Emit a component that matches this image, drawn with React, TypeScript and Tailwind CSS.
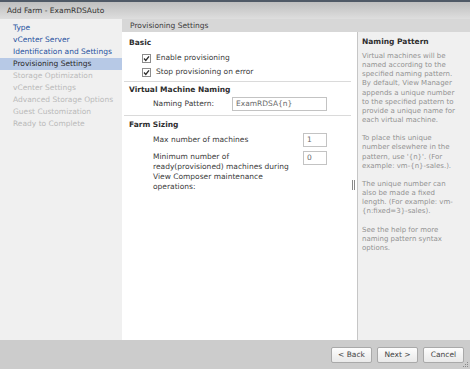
import React from "react";

const navItems = [
  { label: "Type", state: "link" },
  { label: "vCenter Server", state: "link" },
  { label: "Identification and Settings", state: "link" },
  { label: "Provisioning Settings", state: "active" },
  { label: "Storage Optimization", state: "off" },
  { label: "vCenter Settings", state: "off" },
  { label: "Advanced Storage Options", state: "off" },
  { label: "Guest Customization", state: "off" },
  { label: "Ready to Complete", state: "off" },
];

const helpParas = [
  [
    "Virtual machines will be",
    "named according to the",
    "specified naming pattern.",
    "By default, View Manager",
    "appends a unique number",
    "to the specified pattern to",
    "provide a unique name for",
    "each virtual machine.",
  ],
  [
    "To place this unique",
    "number elsewhere in the",
    "pattern, use '{n}'. (For",
    "example: vm-{n}-sales.).",
  ],
  [
    "The unique number can",
    "also be made a fixed",
    "length. (For example: vm-",
    "{n:fixed=3}-sales).",
  ],
  ["See the help for more", "naming pattern syntax", "options."],
];

function CheckBox() {
  return (
    <svg width="9" height="9" viewBox="0 0 9 9" className="shrink-0">
      <rect x="0.5" y="0.5" width="8" height="8" fill="#fff" stroke="#8c8c8c" />
      <path d="M2 4.5 L3.8 6.5 L7 2.3" fill="none" stroke="#2d2d2d" strokeWidth="1.3" />
    </svg>
  );
}

function Field({ value, className }: { value: string; className: string }) {
  return (
    <div
      className={`h-[14px] border border-[#c3c3c3] bg-white px-[3px] leading-[12px] text-[#6a6a6a] ${className}`}
    >
      {value}
    </div>
  );
}

function Button({ label }: { label: string }) {
  return (
    <div className="flex h-[16px] w-[41px] items-center justify-center rounded-[2px] border border-[#a9a9a9] bg-gradient-to-b from-[#fdfdfd] to-[#e9e9e9] text-[#444]">
      {label}
    </div>
  );
}

export default function App() {
  return (
    <div className="flex h-[369px] w-[470px] flex-col overflow-hidden bg-[#f0f0f0] text-[7.5px] text-[#3a3a3a] [font-family:'DejaVu_Sans',Verdana,sans-serif]">
      {/* title bar */}
      <div className="flex h-[19px] shrink-0 items-center border-t-2 border-[#4f5966] bg-gradient-to-b from-[#bfbfbf] to-[#dedede] pl-[7px] leading-[10px] text-[#333]">
        Add Farm - ExamRDSAuto
      </div>

      <div className="flex min-h-0 flex-1">
        {/* wizard steps */}
        <nav className="w-[122px] shrink-0 bg-[#f0f0f0] pt-[3px]">
          {navItems.map((n) => (
            <div
              key={n.label}
              className={`h-[12px] pl-[13px] leading-[12px] whitespace-nowrap ${
                n.state === "active"
                  ? "bg-[#b7c9e6] text-[#2a2a2a]"
                  : n.state === "link"
                  ? "text-[#2752a0]"
                  : "text-[#bababa]"
              }`}
            >
              {n.label}
            </div>
          ))}
        </nav>

        <div className="flex min-w-0 flex-1 flex-col">
          <div className="h-[13px] shrink-0 bg-[#d7d7d7] pl-[8px] leading-[13px] text-[#3c3c3c]">
            Provisioning Settings
          </div>

          <div className="flex min-h-0 flex-1">
            {/* form */}
            <section className="flex min-w-0 flex-1 flex-col bg-white pt-[6px]">
              <div className="pl-[7px] font-bold leading-[10px] text-[#2e2e2e]">Basic</div>
              <div className="mt-[3px] flex h-[14px] items-center gap-[5px] pl-[20px]">
                <CheckBox />
                <span>Enable provisioning</span>
              </div>
              <div className="flex h-[14px] items-center gap-[5px] pl-[20px]">
                <CheckBox />
                <span>Stop provisioning on error</span>
              </div>
              <div className="mt-[2px] ml-[2px] mr-[6px] h-px bg-[#dadada]" />

              <div className="mt-[3px] pl-[7px] font-bold leading-[10px] text-[#2e2e2e]">
                Virtual Machine Naming
              </div>
              <div className="mt-[2px] flex h-[14px] items-center pl-[31px]">
                <span className="w-[79px]">Naming Pattern:</span>
                <Field value="ExamRDSA{n}" className="w-[95px]" />
              </div>
              <div className="mt-[4px] ml-[2px] mr-[6px] h-px bg-[#dadada]" />

              <div className="mt-[4px] pl-[7px] font-bold leading-[10px] text-[#2e2e2e]">Farm Sizing</div>
              <div className="mt-[3px] flex h-[14px] items-center pl-[31px]">
                <span className="w-[150px]">Max number of machines</span>
                <Field value="1" className="w-[24px]" />
              </div>
              <div className="mt-[4px] flex pl-[31px] pr-[2px]">
                <span className="w-[150px] pt-px leading-[10px] whitespace-nowrap">
                  Minimum number of
                  <br />
                  ready(provisioned) machines during
                  <br />
                  View Composer maintenance
                  <br />
                  operations:
                </span>
                <Field value="0" className="w-[24px]" />
                <div className="ml-auto mb-[2px] flex gap-px self-end">
                  <div className="h-[10px] w-px bg-[#8a8a8a]" />
                  <div className="h-[10px] w-px bg-[#8a8a8a]" />
                </div>
              </div>
            </section>

            {/* help */}
            <aside className="w-[113px] shrink-0 border-l border-[#c6c6c6] bg-[#f0f0f0] pt-[5px] pl-[4px]">
              <div className="font-bold leading-[10px] text-[#2e2e2e]">Naming Pattern</div>
              <div className="mt-[5px] flex flex-col gap-[9px] text-[7px] leading-[9.15px] whitespace-nowrap text-[#929292]">
                {helpParas.map((p, i) => (
                  <div key={i}>
                    {p.map((l) => (
                      <div key={l}>{l}</div>
                    ))}
                  </div>
                ))}
              </div>
            </aside>
          </div>
        </div>
      </div>

      {/* footer */}
      <footer className="relative flex h-[29px] shrink-0 items-center justify-end gap-[5px] bg-[#cccccc] pr-[6px]">
        <Button label="< Back" />
        <Button label="Next >" />
        <Button label="Cancel" />
        <svg width="6" height="6" viewBox="0 0 6 6" className="absolute right-[1px] bottom-[1px]">
          <rect x="4" y="0" width="1" height="1" fill="#8a8a8a" />
          <rect x="2" y="2" width="1" height="1" fill="#8a8a8a" />
          <rect x="4" y="2" width="1" height="1" fill="#8a8a8a" />
          <rect x="0" y="4" width="1" height="1" fill="#8a8a8a" />
          <rect x="2" y="4" width="1" height="1" fill="#8a8a8a" />
          <rect x="4" y="4" width="1" height="1" fill="#8a8a8a" />
        </svg>
      </footer>
    </div>
  );
}
